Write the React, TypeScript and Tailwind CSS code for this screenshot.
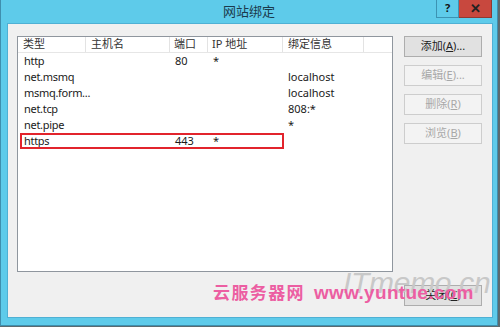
import React from "react";

type Row = { type: string; host: string; port: string; ip: string; info: string };

const rows: Row[] = [
  { type: "http", host: "", port: "80", ip: "*", info: "" },
  { type: "net.msmq", host: "", port: "", ip: "", info: "localhost" },
  { type: "msmq.form...", host: "", port: "", ip: "", info: "localhost" },
  { type: "net.tcp", host: "", port: "", ip: "", info: "808:*" },
  { type: "net.pipe", host: "", port: "", ip: "", info: "*" },
  { type: "https", host: "", port: "443", ip: "*", info: "" },
];

const font = { fontFamily: '"Noto Sans", "Noto Sans CJK SC", sans-serif' };

const SideButton = ({ label, disabled }: { label: React.ReactNode; disabled?: boolean }) => (
  <div
    className={
      disabled
        ? "h-[21px] w-[78px] flex items-center justify-center border border-[#cdcdcd] bg-[#f3f3f3] text-[#a8a8a8] text-[11px]"
        : "h-[21px] w-[78px] flex items-center justify-center border border-[#adadad] bg-[#e1e1e1] text-[#222] text-[11px]"
    }
  >
    {label}
  </div>
);

const App: React.FC = () => {
  return (
    <div className="w-[500px] h-[327px] bg-[#5b6b70] overflow-hidden" style={font}>
      <div className="relative w-[498px] h-[326px] bg-[#5ecbea] border-l border-[#3f8fae] border-b border-r">
        {/* title bar */}
        <div className="relative h-[22px] flex items-center justify-center">
          <span className="text-[13px] text-[#1b3a4c] mt-[1px]">网站绑定</span>
          <div className="absolute right-[5px] top-0 flex">
            <div className="w-[23px] h-[18px] border border-[#3c93b3] border-t-0 flex items-center justify-center text-[11px] font-bold text-[#111]">
              ?
            </div>
            <div className="w-[33px] h-[18px] bg-[#c8483e] border border-[#8e3a33] border-t-0 border-l-0 flex items-center justify-center text-[13px] font-bold text-[#222]">
              ✕
            </div>
          </div>
        </div>

        {/* client area */}
        <div className="ml-[6px] mt-[1px] w-[486px] h-[295px] bg-[#f0f0f0] border border-[#4fb0d4] pl-[9px] pt-[12px]">
          <div className="flex gap-[11px]">
            {/* list view */}
            <div className="relative w-[376px] h-[236px] bg-white border border-[#8f969e] text-[11px] text-[#1a1a1a]">
              <div className="flex h-[16px] items-center border-b border-[#e6e6e6] text-[#333]">
                <div className="w-[68px] pl-[5px] border-r border-[#e3e3e3] h-full flex items-center">类型</div>
                <div className="w-[84px] pl-[5px] border-r border-[#e3e3e3] h-full flex items-center">主机名</div>
                <div className="w-[38px] pl-[4px] border-r border-[#e3e3e3] h-full flex items-center">端口</div>
                <div className="w-[75px] pl-[4px] border-r border-[#e3e3e3] h-full flex items-center">IP 地址</div>
                <div className="w-[81px] pl-[5px] border-r border-[#e3e3e3] h-full flex items-center">绑定信息</div>
              </div>
              {rows.map((r) => (
                <div key={r.type} className="flex h-[16px] items-center whitespace-nowrap">
                  <div className="w-[68px] pl-[6px] tracking-[-0.3px]">{r.type}</div>
                  <div className="w-[84px] pl-[5px]">{r.host}</div>
                  <div className="w-[38px] pl-[5px]">{r.port}</div>
                  <div className="w-[75px] pl-[5px]">{r.ip}</div>
                  <div className="w-[81px] pl-[5px]">{r.info}</div>
                </div>
              ))}
              {/* highlight box */}
              <div className="absolute left-[2px] top-[96px] w-[264px] h-[16px] border-2 border-[#e2242c]" />
            </div>

            {/* buttons */}
            <div className="flex flex-col gap-[8px]">
              <SideButton label={<>添加(<u>A</u>)...</>} />
              <SideButton label={<>编辑(<u>E</u>)...</>} disabled />
              <SideButton label={<>删除(<u>R</u>)</>} disabled />
              <SideButton label={<>浏览(<u>B</u>)</>} disabled />
            </div>
          </div>

          <div className="flex justify-end pr-[10px] mt-[13px]">
            <SideButton label={<>关闭(<u>C</u>)</>} />
          </div>
        </div>

        {/* watermarks */}
        <div
          className="absolute left-[342px] top-[260px] text-[30px] italic text-[#c8c8c8] tracking-[-0.3px] whitespace-nowrap pointer-events-none"
          style={{ fontFamily: '"Liberation Sans", sans-serif' }}
        >
          ITmemo.cn
        </div>
        <div className="absolute left-[212px] top-[279px] flex items-baseline whitespace-nowrap pointer-events-none text-[#ec5ea2] font-bold">
          <span className="text-[17px] tracking-[1.4px]" style={{ fontFamily: '"Noto Sans CJK SC", sans-serif' }}>
            云服务器网
          </span>
          <span
            className="ml-[9px] text-[19px] tracking-[0.3px]"
            style={{ fontFamily: '"Liberation Sans", sans-serif' }}
          >
            www.yuntue.com
          </span>
        </div>
      </div>
    </div>
  );
};

export default App;
